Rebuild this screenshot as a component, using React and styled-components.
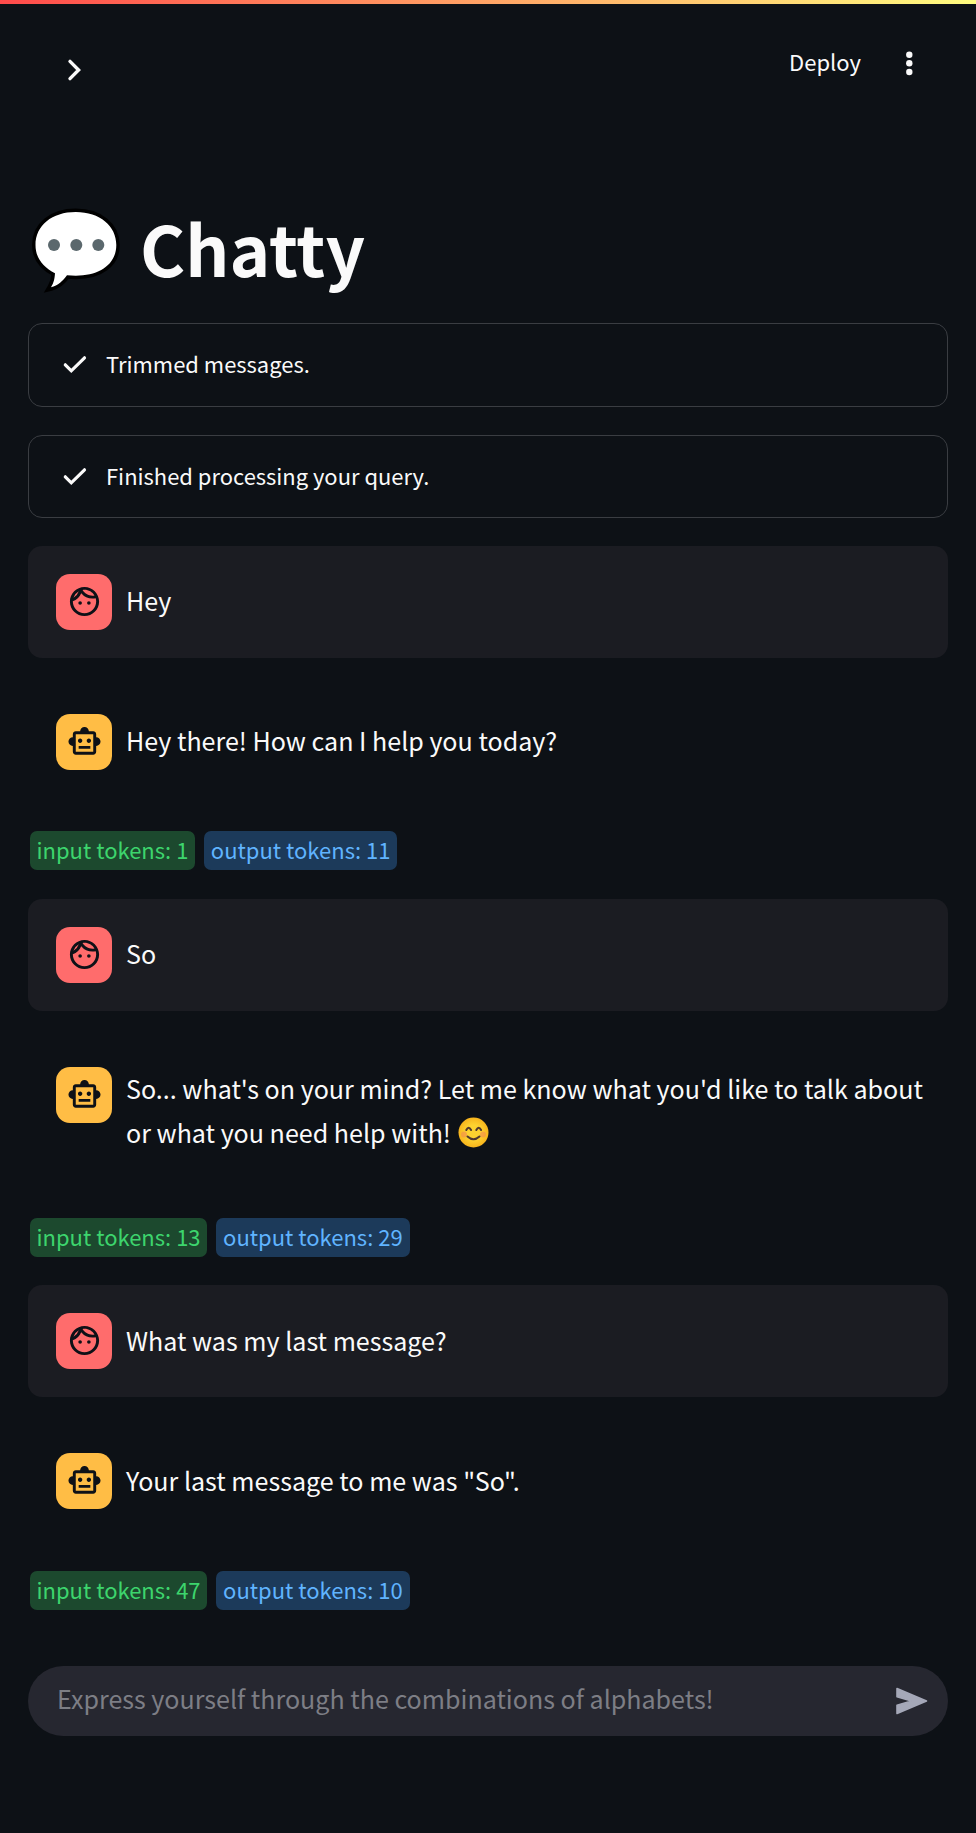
import React from "react";
import styled, { createGlobalStyle } from "styled-components";
import { MdOutlineFace, MdOutlineSmartToy } from "react-icons/md";

const GlobalStyle = createGlobalStyle`
  *, *::before, *::after { box-sizing: border-box; }
  body {
    margin: 0;
    background: #0d1116;
    color: #fafafa;
    font-family: "Noto Sans CJK SC", "Noto Sans", sans-serif;
  }
`;

const Page = styled.div`
  min-height: 1833px;
  display: flex;
  flex-direction: column;
`;

const Decoration = styled.div`
  height: 4px;
  background: linear-gradient(90deg, #ff4b4b, #fffd80);
`;

const Header = styled.header`
  height: 101px;
  padding: 0 45px 0 53px;
  display: flex;
  justify-content: space-between;
  align-items: flex-start;
`;

const IconButton = styled.button`
  display: flex;
  padding: 0;
  margin-top: ${(p) => p.$top}px;
  border: 0;
  background: none;
  color: inherit;
`;

const Actions = styled.div`
  display: flex;
  align-items: flex-start;
`;

const DeployButton = styled.button`
  margin: 36px 28px 0 0;
  padding: 0;
  border: 0;
  background: none;
  color: inherit;
  font-family: inherit;
  font-size: 22px;
  line-height: 42px;
`;

const Title = styled.h1`
  margin: 92px 0 0;
  height: 126px;
  padding-left: 31px;
  display: flex;
  align-items: flex-start;
  gap: 17px;
  font-size: 69px;
  font-weight: 700;
  line-height: 100px;
  white-space: nowrap;
`;

const TitleIcon = styled.svg`
  margin-top: 10px;
  flex: none;
`;

const Content = styled.main`
  padding: 0 28px;
  display: flex;
  flex-direction: column;
`;

const Status = styled.section`
  height: ${(p) => p.$height || 84}px;
  margin-bottom: 28px;
  padding: 0 27px;
  display: flex;
  align-items: flex-start;
  gap: 10px;
  border: 1px solid #3a3d42;
  border-radius: 14px;
  font-size: 21.95px;
  line-height: 40px;
  white-space: nowrap;

  svg { margin-top: 21px; }
`;

const StatusLabel = styled.span`
  margin-top: 20px;
`;

const Message = styled.article`
  height: ${(p) => p.$height || 112}px;
  margin-bottom: ${(p) => p.$gap || 28}px;
  padding: 28px;
  display: flex;
  align-items: flex-start;
  gap: 14px;
  border-radius: 14px;
  background: ${(p) => (p.$user ? "#1b1c22" : "transparent")};
`;

const Avatar = styled.div`
  width: 56px;
  height: 56px;
  padding: 0 0 1px 1px;
  flex: none;
  display: flex;
  align-items: center;
  justify-content: center;
  border-radius: 14px;
  background: ${(p) => (p.$user ? "#ff6c6c" : "#ffbd45")};
  color: #0e1117;
`;

const MessageText = styled.p`
  margin: ${(p) => p.$top ?? 4}px 0 0;
  font-size: 25.07px;
  line-height: 44px;
  white-space: nowrap;
`;

const Smile = styled.svg`
  margin-left: 1px;
  vertical-align: -5px;
`;

const Tokens = styled.div`
  height: 40px;
  margin-bottom: ${(p) => p.$gap ?? 28}px;
  padding-left: 2px;
  display: flex;
  gap: 9px;
`;

const Badge = styled.span`
  height: 39px;
  padding: 0 ${(p) => (p.$tone === "green" ? 6.5 : 7)}px;
  border-radius: 7px;
  font-size: 22px;
  line-height: 36px;
  white-space: nowrap;
  color: ${(p) => (p.$tone === "green" ? "#3dd56d" : "#60b4ff")};
  background: ${(p) => (p.$tone === "green" ? "#1c492e" : "#1c3a5a")};
`;

const ChatInput = styled.div`
  height: 70px;
  margin: 0 28px;
  padding: 0 20px 0 29px;
  display: flex;
  align-items: center;
  justify-content: space-between;
  border-radius: 35px;
  background: #262730;
  color: #7d7e85;
  font-size: 25.07px;
  line-height: 44px;
  white-space: nowrap;
`;

const Placeholder = styled.span`
  padding-bottom: 6px;
`;

const CheckIcon = () => (
  <svg width="40" height="40" viewBox="0 0 40 40" fill="none" stroke="currentColor" strokeWidth="3.2" strokeLinecap="round">
    <path d="M9.3 19.8 15.3 25.800 28.500 12.800" />
  </svg>
);

const Bubble = () => (
  <TitleIcon width="92" height="88" viewBox="0 0 92 88" role="img" aria-label="speech balloon" overflow="visible">
    <path
      d="M44.800 5C21 5 4.500 18.500 4.500 38c0 13 7.500 22 19.500 28.200-.4 5.800-1.200 9.300-4 14.100C27 78.500 32 74 36 68.300c3 .3 6 .4 8.800.4C69 68.700 85.300 57 85.300 38S69 5 44.800 5Z"
      fill="#fff" stroke="#000" strokeWidth="7" paintOrder="stroke"
    />
    <circle cx="23" cy="38" r="6" fill="#5b686d" />
    <circle cx="45.300" cy="38" r="6" fill="#5b686d" />
    <circle cx="67.300" cy="38" r="6" fill="#5b686d" />
  </TitleIcon>
);

const SmileIcon = () => (
  <Smile width="31" height="31" viewBox="0 0 31 31" role="img" aria-label="smiling face">
    <defs>
      <radialGradient id="face">
        <stop offset="0.5" stopColor="#fdd230" />
        <stop offset="1" stopColor="#f7b41c" />
      </radialGradient>
    </defs>
    <circle cx="15.500" cy="15.500" r="15" fill="url(#face)" />
    <circle cx="6" cy="17.500" r="3" fill="#f28b50" opacity=".6" />
    <circle cx="25" cy="17.500" r="3" fill="#f28b50" opacity=".6" />
    <g fill="none" stroke="#50382f" strokeWidth="2" strokeLinecap="round">
      <path d="M8.300 13q2.300-4.600 4.800 0M18.300 13q2.400-4.600 4.800 0M9.500 19.500q6 5.500 12 0" />
    </g>
  </Smile>
);

function Chat({ user, height, gap, textTop, children }) {
  return (
    <Message $user={user} $height={height} $gap={gap}>
      <Avatar $user={user}>{user ? <MdOutlineFace size={35} /> : <MdOutlineSmartToy size={35} />}</Avatar>
      <MessageText $top={textTop}>{children}</MessageText>
    </Message>
  );
}

function TokenRow({ input, output, gap }) {
  return (
    <Tokens $gap={gap}>
      <Badge $tone="green">input tokens: {input}</Badge>
      <Badge $tone="blue">output tokens: {output}</Badge>
    </Tokens>
  );
}

export default function App() {
  return (
    <Page>
      <GlobalStyle />
      <Decoration />
      <Header>
        <IconButton $top={45} aria-label="Open sidebar">
          <svg width="42" height="42" viewBox="0 0 42 42" fill="none" stroke="currentColor" strokeWidth="3.400" strokeLinecap="round">
            <path d="M17 12.400 25.600 21 17 29.600" />
          </svg>
        </IconButton>
        <Actions>
          <DeployButton>Deploy</DeployButton>
          <IconButton $top={38} aria-label="Main menu">
            <svg width="42" height="42" viewBox="0 0 42 42" fill="currentColor">
              <circle cx="20.300" cy="12.700" r="3.200" />
              <circle cx="20.300" cy="21.300" r="3.200" />
              <circle cx="20.300" cy="30" r="3.200" />
            </svg>
          </IconButton>
        </Actions>
      </Header>
      <Title>
        <Bubble />
        Chatty
      </Title>
      <Content>
        <Status><CheckIcon /><StatusLabel>Trimmed messages.</StatusLabel></Status>
        <Status $height={83}><CheckIcon /><StatusLabel>Finished processing your query.</StatusLabel></Status>
        <Chat user>Hey</Chat>
        <Chat gap={33}>Hey there! How can I help you today?</Chat>
        <TokenRow input="1" output="11" />
        <Chat user>So</Chat>
        <Chat textTop={-1} height={146} gap={33}>
          So... what's on your mind? Let me know what you'd like to talk about
          <br />
          or what you need help with! <SmileIcon />
        </Chat>
        <TokenRow input="13" output="29" gap={27} />
        <Chat user textTop={5}>What was my last message?</Chat>
        <Chat gap={34} textTop={5}>Your last message to me was "So".</Chat>
        <TokenRow input="47" output="10" gap={55} />
      </Content>
      <ChatInput>
        <Placeholder>Express yourself through the combinations of alphabets!</Placeholder>
        <IconButton $top={0} aria-label="Send">
          <svg width="32" height="28" viewBox="0 0 32 28" fill="#a5a8b8" stroke="#a5a8b8" strokeWidth="1.600" strokeLinejoin="round">
            <path d="M1 1.600 30.500 14 1 26.400V18.300L15.500 14 1 9.700Z" />
          </svg>
        </IconButton>
      </ChatInput>
    </Page>
  );
}
